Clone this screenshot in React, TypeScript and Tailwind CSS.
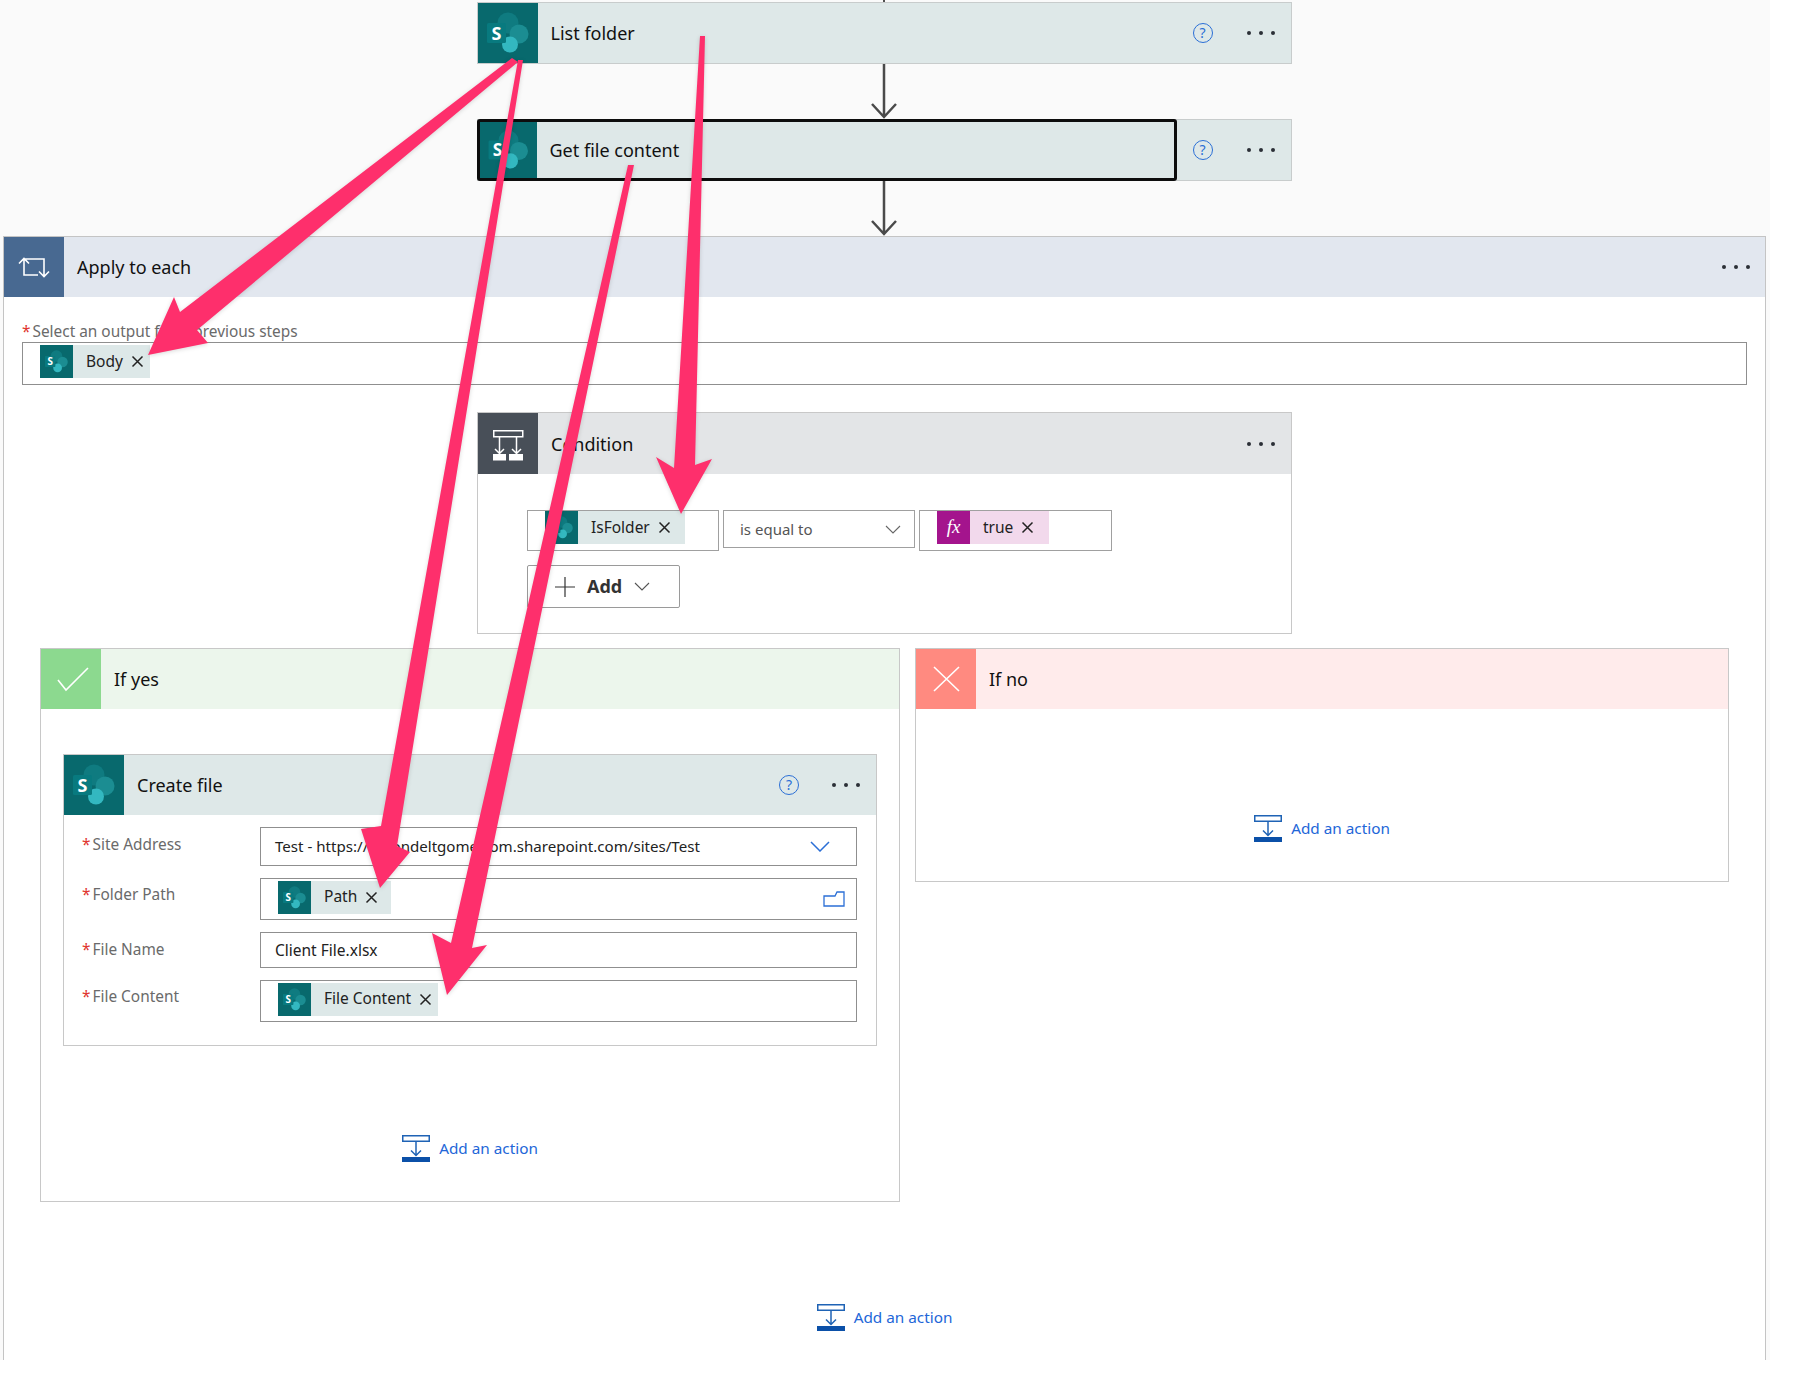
/**
 * Flow designer screenshot with annotation arrows on top
 */
import type { ReactNode } from 'react';

function SharePointIcon({ size }: { size: number }): JSX.Element {
    return (
        <svg width={size} height={size} viewBox="0 0 60 60" className="block">
            <rect width="60" height="60" fill="#08696d" />
            <circle cx="30" cy="20" r="10.5" fill="#0f7b80" />
            <circle cx="41" cy="31" r="9.5" fill="#1b8d92" />
            <circle cx="32" cy="41.5" r="8" fill="#33b8c0" />
            <rect x="9" y="20" width="19" height="20" rx="1.5" fill="#087a7f" />
            <text x="18.5" y="36.5" textAnchor="middle" fontSize="18" fontWeight="700" fill="#ffffff" fontFamily="'Noto Sans', sans-serif">S</text>
        </svg>
    );
}

function Help(): JSX.Element {
    return (
        <span className="flex h-[20px] w-[20px] items-center justify-center rounded-full border-[1.5px] border-[#2b6fd6] text-[14px] leading-none text-[#2b6fd6]">?</span>
    );
}

function Dots(): JSX.Element {
    return (
        <span className="flex items-center gap-[8px]">
            <span className="h-[4px] w-[4px] rounded-full bg-[#2b2f36]" />
            <span className="h-[4px] w-[4px] rounded-full bg-[#2b2f36]" />
            <span className="h-[4px] w-[4px] rounded-full bg-[#2b2f36]" />
        </span>
    );
}

function Connector({ height }: { height: number }): JSX.Element {
    return (
        <svg width="28" height={height} viewBox={`0 0 28 ${height}`} className="-ml-[2px] block">
            <path d={`M14 0V${height - 2}M2 ${height - 15}L14 ${height - 2}L26 ${height - 15}`} fill="none" stroke="#4a4a4a" strokeWidth="2.5" />
        </svg>
    );
}

function CloseIcon(): JSX.Element {
    return (
        <svg width="13" height="13" viewBox="0 0 13 13" className="block">
            <path d="M1.5 1.5L11.5 11.5M11.5 1.5L1.5 11.5" stroke="#222222" strokeWidth="1.5" fill="none" />
        </svg>
    );
}

function Token({ label, width }: { label: string; width: string }): JSX.Element {
    return (
        <div className={`flex h-[33px] items-center bg-[#dde8e8] text-[15.5px] text-[#222222] ${width}`}>
            <SharePointIcon size={33} />
            <span className="ml-[13px] mr-[8px]">{label}</span>
            <CloseIcon />
        </div>
    );
}

function ActionCard({ title, selected }: { title: string; selected?: boolean }): JSX.Element {
    return (
        <div className="-ml-[2px] flex h-[62px] w-[815px] items-stretch border border-[#c8cccc] bg-[#dee8e8]">
            {selected ? (
                <div className="-m-px flex flex-1 items-stretch overflow-hidden rounded-[3px] border-[3px] border-[#0d0d0d]">
                    <div className="flex w-[57px] items-center justify-center overflow-hidden bg-[#08696d]">
                        <SharePointIcon size={60} />
                    </div>
                    <span className="ml-[13px] self-center text-[18px] text-[#111111]">{title}</span>
                </div>
            ) : (
                <div className="flex flex-1 items-stretch">
                    <div className="flex w-[60px] items-center justify-center bg-[#08696d]">
                        <SharePointIcon size={60} />
                    </div>
                    <span className="ml-[13px] self-center text-[18px] text-[#111111]">{title}</span>
                </div>
            )}
            <div className="flex w-[115px] items-center justify-end gap-[34px] pr-[16px]">
                <Help />
                <Dots />
            </div>
        </div>
    );
}

function AddAction(): JSX.Element {
    return (
        <div className="flex items-center gap-[9px] text-[15.3px] text-[#2266d8]">
            <svg width="28" height="27" viewBox="0 0 28 27" className="block">
                <rect x="0.75" y="0.75" width="26.5" height="5.5" fill="none" stroke="#1f63b5" strokeWidth="1.5" />
                <path d="M14 6V20M9 15.5L14 20.5L19 15.5" fill="none" stroke="#1f63b5" strokeWidth="1.5" />
                <rect y="22" width="28" height="5" fill="#0b50a8" />
            </svg>
            <span>Add an action</span>
        </div>
    );
}

function Label({ children }: { children: ReactNode }): JSX.Element {
    return (
        <span className="text-[15.4px] leading-[20px] text-[#6a6a6a]">
            <span className="mr-[2px] text-[#e0342f]">*</span>
            {children}
        </span>
    );
}

function FieldRow({ label, height, pad, children }: { label: string; height: number; pad: string; children: ReactNode }): JSX.Element {
    return (
        <div className="flex">
            <div className={`w-[196px] pl-[18px] ${pad}`}>
                <Label>{label}</Label>
            </div>
            <div className="flex w-[597px] items-center border-[1.5px] border-[#8f8f8f] bg-white pl-[14px] pr-[15px] text-[15.5px] text-[#222222]" style={{ height }}>
                {children}
            </div>
        </div>
    );
}

function Arrows(): JSX.Element {
    return (
        <svg width="1800" height="1388" viewBox="0 0 1800 1388" className="pointer-events-none absolute left-0 top-0 drop-shadow-sm">
            <g fill="#fe2f6c">
                <polygon points="512,58 518,62 197,330 208,343 148,355 174,297 180,312" />
                <polygon points="518,60 523,60 397,846 410,852 380,888 361,829 381,826" />
                <polygon points="700,36 705,36 695,465 712,459 681,514 656,457 674,468" />
                <polygon points="628,165 634,165 472,948 487,945 447,995 432,933 451,943" />
            </g>
        </svg>
    );
}

export default function App(): JSX.Element {
    return (
        <div className="relative h-[1388px] w-[1800px] overflow-hidden bg-white font-['Noto_Sans',sans-serif]">
            <div className="flex h-[1360px] w-[1770px] flex-col items-center bg-[#fafafa]">
                <div className="-ml-[2px] h-[2px] w-[2px] bg-[#505050]" />
                <ActionCard title="List folder" />
                <Connector height={55} />
                <ActionCard title="Get file content" selected />
                <Connector height={55} />

                <div className="ml-[3px] flex w-[1763px] flex-1 flex-col self-start border-x border-t border-[#c4c4c4] bg-white">
                    <div className="flex h-[60px] shrink-0 items-center bg-[#e2e7ef] pr-[15px]">
                        <div className="flex h-[60px] w-[60px] items-center justify-center bg-[#486991]">
                            <svg width="60" height="60" viewBox="0 0 60 60">
                                <path d="M34 38H20V22M15 26.5L20 21.5L25 26.5M20 22H40V39M35 34.5L40 39.5L45 34.5" fill="none" stroke="#ffffff" strokeWidth="1.6" />
                            </svg>
                        </div>
                        <span className="ml-[13px] flex-1 text-[18px] text-[#111111]">Apply to each</span>
                        <Dots />
                    </div>

                    <div className="flex flex-1 flex-col px-[18px] pt-[25px]">
                        <Label>Select an output from previous steps</Label>
                        <div className="flex h-[43px] items-start border-[1.5px] border-[#8f8f8f] pl-[17px] pt-[2px]">
                            <Token label="Body" width="w-[110px]" />
                        </div>

                        <div className="mx-auto mt-[27px] flex h-[222px] w-[815px] flex-col border border-[#c8c8c8]">
                            <div className="flex h-[61px] shrink-0 items-center bg-[#e3e5e7] pr-[16px]">
                                <div className="flex h-[61px] w-[60px] items-center justify-center bg-[#484f58]">
                                    <svg width="60" height="60" viewBox="0 0 60 60">
                                        <rect x="15.75" y="16.75" width="29" height="6" fill="none" stroke="#ffffff" strokeWidth="1.5" />
                                        <path d="M21.5 23V39M17 35L21.5 39.5L26 35M38.5 23V39M34 35L38.5 39.5L43 35" fill="none" stroke="#ffffff" strokeWidth="1.5" />
                                        <rect x="15" y="40" width="13" height="6.5" fill="#ffffff" />
                                        <rect x="31" y="40" width="14" height="6.5" fill="#ffffff" />
                                    </svg>
                                </div>
                                <span className="ml-[13px] flex-1 pt-[1px] text-[18px] text-[#111111]">Condition</span>
                                <Dots />
                            </div>

                            <div className="flex flex-col pl-[49px] pt-[36px]">
                                <div className="flex items-start gap-[4px]">
                                    <div className="h-[41px] w-[192px] border-[1.5px] border-[#a0a0a0] pl-[17px]">
                                        <Token label="IsFolder" width="w-[140px]" />
                                    </div>
                                    <div className="flex h-[38px] w-[192px] items-center justify-between border-[1.5px] border-[#a0a0a0] pl-[16px] pr-[13px] text-[15px] text-[#555555]">
                                        <span>is equal to</span>
                                        <svg width="16" height="9" viewBox="0 0 16 9">
                                            <path d="M1 1L8 8L15 1" fill="none" stroke="#666666" strokeWidth="1.1" />
                                        </svg>
                                    </div>
                                    <div className="h-[41px] w-[193px] border-[1.5px] border-[#a0a0a0] pl-[17px]">
                                        <div className="flex h-[33px] w-[112px] items-center bg-[#f2d9ec] text-[15.5px] text-[#222222]">
                                            <span className="flex h-[33px] w-[33px] items-center justify-center bg-[#a4148d] font-['Liberation_Serif',serif] text-[19px] italic text-white">fx</span>
                                            <span className="ml-[13px] mr-[8px]">true</span>
                                            <CloseIcon />
                                        </div>
                                    </div>
                                </div>
                                <div className="mt-[14px] flex h-[43px] w-[153px] items-center rounded-[2px] border border-[#9a9a9a] pl-[26px] text-[18px] font-bold text-[#333333]">
                                    <svg width="22" height="22" viewBox="0 0 22 22">
                                        <path d="M11 1V21M1 11H21" stroke="#333333" strokeWidth="1.2" fill="none" />
                                    </svg>
                                    <span className="ml-[11px]">Add</span>
                                    <svg width="16" height="9" viewBox="0 0 16 9" className="ml-[12px]">
                                        <path d="M1 1L8 8L15 1" fill="none" stroke="#555555" strokeWidth="1.1" />
                                    </svg>
                                </div>
                            </div>
                        </div>

                        <div className="mt-[14px] flex items-start gap-[15px] pl-[18px]">
                            <div className="flex h-[554px] w-[860px] flex-col border border-[#c8c8c8]">
                                <div className="flex h-[60px] shrink-0 items-center bg-[#ecf6ec]">
                                    <div className="h-[60px] w-[60px] bg-[#8cd98f]">
                                        <svg width="60" height="60" viewBox="0 0 60 60">
                                            <path d="M17 31L25 41L47 19" fill="none" stroke="#ffffff" strokeWidth="1.6" />
                                        </svg>
                                    </div>
                                    <span className="ml-[13px] text-[18px] text-[#111111]">If yes</span>
                                </div>

                                <div className="ml-[22px] mt-[45px] flex h-[292px] w-[814px] flex-col border border-[#c8c8c8]">
                                    <div className="flex h-[60px] shrink-0 items-center bg-[#dee8e8] pr-[16px]">
                                        <div className="flex h-[60px] w-[60px] items-center justify-center bg-[#08696d]">
                                            <SharePointIcon size={60} />
                                        </div>
                                        <span className="ml-[13px] flex-1 text-[18px] text-[#111111]">Create file</span>
                                        <div className="flex items-center gap-[33px]">
                                            <Help />
                                            <Dots />
                                        </div>
                                    </div>

                                    <div className="flex flex-col gap-[12px] pt-[12px]">
                                        <FieldRow label="Site Address" height={39} pad="pt-[5px]">
                                            <span className="flex-1 text-[15.1px]">Test - https://moondeltgome.com.sharepoint.com/sites/Test</span>
                                            <svg width="20" height="11" viewBox="0 0 20 11" className="mr-[11px]">
                                                <path d="M1 1L10 10L19 1" fill="none" stroke="#2b6fd6" strokeWidth="1.5" />
                                            </svg>
                                        </FieldRow>
                                        <FieldRow label="Folder Path" height={42} pad="pt-[4px]">
                                            <div className="mb-[4px] ml-[3px] flex-1">
                                                <Token label="Path" width="w-[113px]" />
                                            </div>
                                            <svg width="22" height="16" viewBox="0 0 22 16" className="-mr-[4px]">
                                                <path d="M1 5V15H21V1H14L12 5H1Z" fill="none" stroke="#2b6fd6" strokeWidth="1.3" />
                                            </svg>
                                        </FieldRow>
                                        <FieldRow label="File Name" height={36} pad="pt-[5px]">
                                            <span className="pt-[2px]">Client File.xlsx</span>
                                        </FieldRow>
                                        <FieldRow label="File Content" height={42} pad="pt-[4px]">
                                            <div className="mb-[4px] ml-[3px]">
                                                <Token label="File Content" width="w-[160px]" />
                                            </div>
                                        </FieldRow>
                                    </div>
                                </div>

                                <div className="mt-[89px] flex justify-center">
                                    <AddAction />
                                </div>
                            </div>

                            <div className="flex h-[234px] w-[814px] flex-col border border-[#c8c8c8]">
                                <div className="flex h-[60px] shrink-0 items-center bg-[#ffebeb]">
                                    <div className="h-[60px] w-[60px] bg-[#ff8a80]">
                                        <svg width="60" height="60" viewBox="0 0 60 60">
                                            <path d="M18 18L43 42M43 18L18 42" fill="none" stroke="#ffffff" strokeWidth="1.6" />
                                        </svg>
                                    </div>
                                    <span className="ml-[13px] text-[18px] text-[#111111]">If no</span>
                                </div>
                                <div className="mt-[106px] flex justify-center">
                                    <AddAction />
                                </div>
                            </div>
                        </div>

                        <div className="mt-[102px] flex justify-center">
                            <AddAction />
                        </div>
                    </div>
                </div>
            </div>
            <Arrows />
        </div>
    );
}
